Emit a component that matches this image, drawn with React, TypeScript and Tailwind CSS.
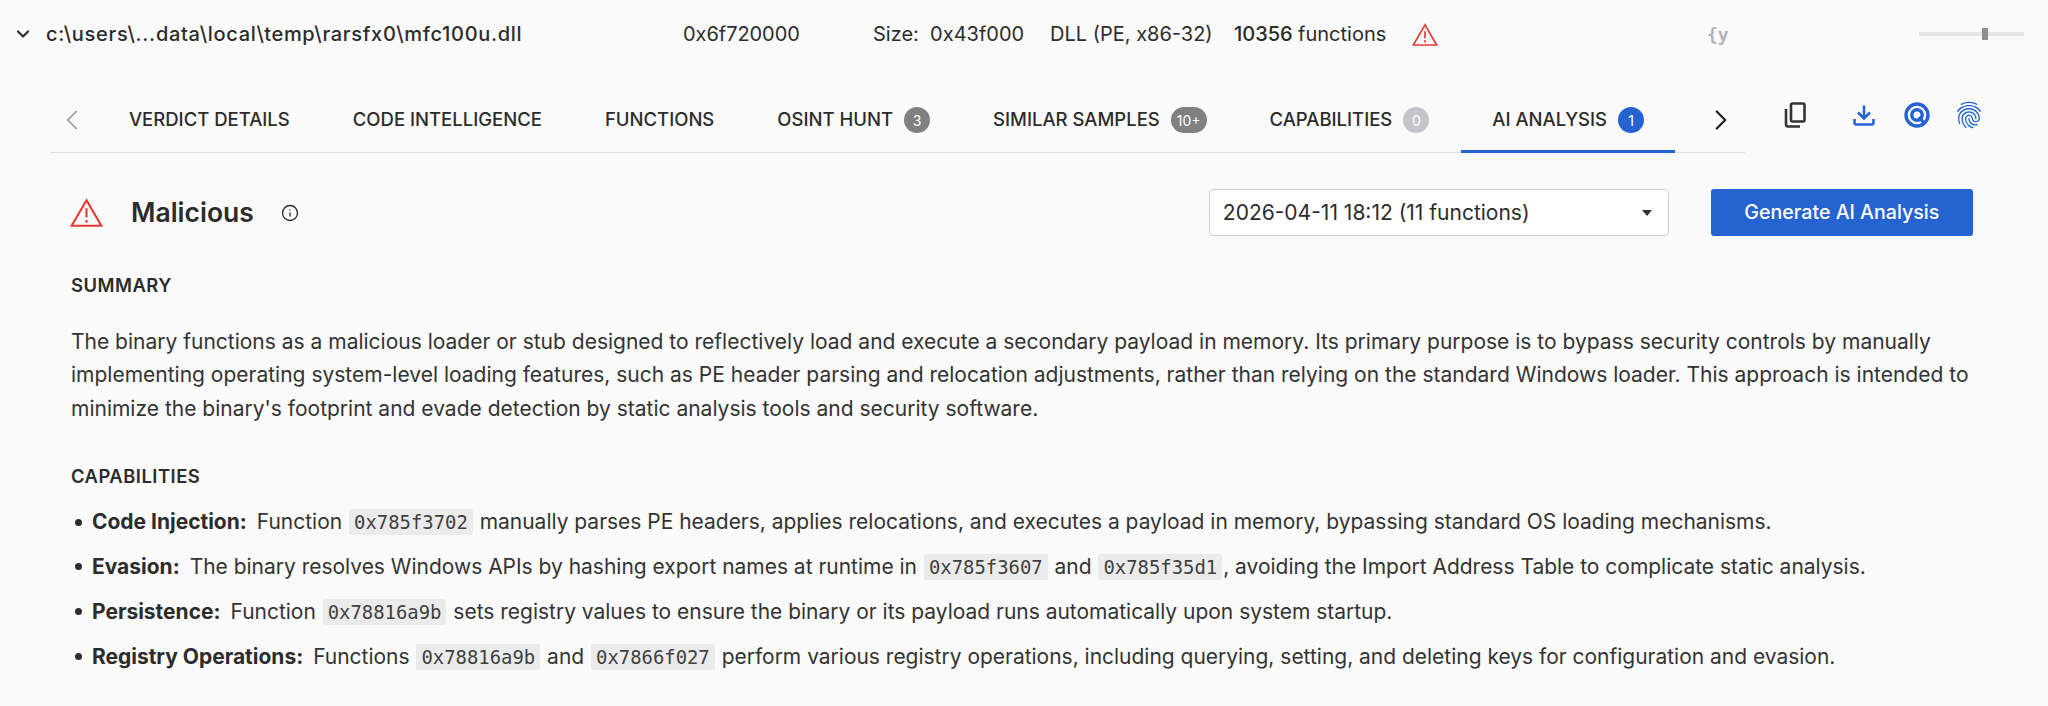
import React from 'react';
import { ChevronDown, ChevronLeft, ChevronRight, Info } from 'lucide-react';
import { MdFingerprint } from 'react-icons/md';

const WarnIcon = ({ className }: { className: string }) => (
  <svg viewBox="0 0 31 27" className={className} fill="none" stroke="#e53935" strokeWidth="2">
    <path d="M15.5 2 L29.5 26 H1.5 Z" strokeLinejoin="miter" />
    <path d="M15.5 9.5 V18" />
    <path d="M15.5 20.5 V23" />
  </svg>
);

const Code = ({ children }: { children: React.ReactNode }) => (
  <code className="bg-[#ebebeb] rounded-[3px] px-[5px] py-[2px] mx-[1px] text-[18.9px] text-[#3f3f3f] font-['DejaVu_Sans_Mono',monospace]">
    {children}
  </code>
);

const Tab = ({ label, badge, color, active }: { label: string; badge?: string; color?: string; active?: boolean }) => (
  <div className="h-full px-[31.5px] pt-[20px] flex items-center gap-[11px] relative">
    <span className="text-[18.5px] font-medium text-[#2c2c2c]">{label}</span>
    {badge && (
      <span className={`${color} min-w-[26px] h-[26px] px-[6px] rounded-full flex items-center justify-center text-white text-[14px]`}>
        {badge}
      </span>
    )}
    {active && <div className="absolute left-0 right-0 bottom-[-1px] h-[3px] bg-[#2563d0]" />}
  </div>
);

const Item = ({ title, children }: { title: string; children: React.ReactNode }) => (
  <li className="h-[44.8px] flex items-center whitespace-nowrap">
    <span className="w-[7px] h-[7px] bg-[#2c2c2c] rounded-full ml-[4px] mr-[10px]" />
    <span>
      <b className="font-bold text-[#2c2c2c]">{title}:</b>
      <span className="ml-[10px]">{children}</span>
    </span>
  </li>
);

export default function App() {
  return (
    <div className="w-[2048px] h-[706px] overflow-hidden bg-[#fafafa] text-[#2c2c2c] font-['Inter',sans-serif]">
      {/* file header */}
      <div className="h-[68px] flex items-center text-[20px] font-medium whitespace-nowrap">
        <ChevronDown className="w-[20px] h-[20px] ml-[13px] mr-[13px]" strokeWidth={2.6} />
        <span className="w-[637px] tracking-[0.7px]">c:\users\...data\local\temp\rarsfx0\mfc100u.dll</span>
        <span className="w-[190px] font-normal tracking-[-0.05px]">0x6f720000</span>
        <span className="w-[177px] font-normal">Size:&nbsp; 0x43f000</span>
        <span className="w-[184px] font-normal">DLL (PE, x86-32)</span>
        <span className="w-[178px]">10356 <span className="font-normal">functions</span></span>
        <WarnIcon className="w-[26px] h-[23px]" />
        <span className="ml-[269px] w-[212px] text-[18px] font-bold text-[#b3b3b3] font-['DejaVu_Sans_Mono',monospace]">{'{y'}</span>
        <div className="w-[105px] h-[4px] bg-[#e6e6e6] relative">
          <div className="absolute left-[63px] top-[-4px] w-[6px] h-[12px] bg-[#8f8f8f]" />
        </div>
      </div>

      {/* tabs */}
      <div className="flex items-start">
        <div className="ml-[50px] w-[1695px] h-[85px] border-b border-[#e0e0e0] flex items-center">
          <div className="h-full pt-[20px] flex items-center w-[47.5px]">
            <ChevronLeft className="w-[34px] h-[34px] ml-[5px] text-[#9a9a9a]" strokeWidth={1.2} />
          </div>
          <Tab label="VERDICT DETAILS" />
          <Tab label="CODE INTELLIGENCE" />
          <Tab label="FUNCTIONS" />
          <Tab label="OSINT HUNT" badge="3" color="bg-[#808080]" />
          <Tab label="SIMILAR SAMPLES" badge="10+" color="bg-[#808080]" />
          <Tab label="CAPABILITIES" badge="0" color="bg-[#c4c5c9]" />
          <Tab label="AI ANALYSIS" badge="1" color="bg-[#2563d0]" active />
          <ChevronRight className="w-[34px] h-[34px] mt-[20px] ml-[29px] text-[#222]" strokeWidth={1.6} />
        </div>
        <div className="flex items-center h-[85px] pt-[9px] text-[#2563d0]">
          <svg viewBox="0 0 22 26" className="w-[22px] h-[26px] ml-[39px] mr-[47px]" fill="none" stroke="#333" strokeWidth="2.6">
            <rect x="7" y="1.5" width="13.5" height="18" rx="1.5" />
            <path d="M2 7 V22.5 A2 2 0 0 0 4 24.5 H16" />
          </svg>
          <svg viewBox="0 0 22 21" className="w-[22px] h-[21px] mr-[29px]" fill="none" stroke="currentColor" strokeWidth="2.6">
            <path d="M11 0.5 V13" />
            <path d="M5 7.5 L11 13.5 L17 7.5" />
            <path d="M1.5 14 V17.5 A2 2 0 0 0 3.5 19.5 H18.5 A2 2 0 0 0 20.5 17.5 V14" />
          </svg>
          <svg viewBox="0 0 26 26" className="w-[26px] h-[26px] mr-[23px]" fill="none" stroke="currentColor" strokeWidth="3.4">
            <circle cx="13" cy="13" r="11" />
            <circle cx="13" cy="13" r="5.2" />
            <path d="M15 15 L21 22" />
          </svg>
          <MdFingerprint className="w-[32px] h-[32px]" />
        </div>
      </div>

      {/* verdict row */}
      <div className="h-[101px] pt-[18px] flex items-center">
        <WarnIcon className="w-[33px] h-[29px] ml-[70px]" />
        <span className="ml-[28px] text-[26.5px] font-semibold">Malicious</span>
        <Info className="w-[18px] h-[18px] ml-[27px]" strokeWidth={1.8} />
        <div className="ml-[910px] w-[460px] h-[47px] bg-white border border-[#cfcfcf] rounded-[4px] flex items-center justify-between pl-[13px] pr-[16px] text-[21px] whitespace-nowrap">
          <span>2026-04-11 18:12 (11 functions)</span>
          <span className="w-0 h-0 border-x-[5.5px] border-x-transparent border-t-[6px] border-t-[#333]" />
        </div>
        <button className="ml-[42px] w-[262px] h-[47px] bg-[#2563d0] rounded-[3px] text-white text-[19.6px] font-medium">
          Generate AI Analysis
        </button>
      </div>

      {/* summary */}
      <div className="pl-[71px] pr-[60px]">
        <h3 className="text-[18.4px] font-semibold tracking-[0.5px] mt-[19px] h-[24px] leading-[24px]">SUMMARY</h3>
        <p className="mt-[28px] text-[21px] leading-[33.4px] text-[#333]">
          The binary functions as a malicious loader or stub designed to reflectively load and execute a secondary payload in memory. Its primary purpose is to bypass security controls by manually implementing operating system-level loading features, such as PE header parsing and relocation adjustments, rather than relying on the standard Windows loader. This approach is intended to minimize the binary's footprint and evade detection by static analysis tools and security software.
        </p>
        <h3 className="text-[18.4px] font-semibold tracking-[0.5px] mt-[39px] h-[24px] leading-[24px]">CAPABILITIES</h3>
        <ul className="mt-[11.5px] text-[20.97px] text-[#333]">
          <Item title="Code Injection">Function <Code>0x785f3702</Code> manually parses PE headers, applies relocations, and executes a payload in memory, bypassing standard OS loading mechanisms.</Item>
          <Item title="Evasion">The binary resolves Windows APIs by hashing export names at runtime in <Code>0x785f3607</Code> and <Code>0x785f35d1</Code>, avoiding the Import Address Table to complicate static analysis.</Item>
          <Item title="Persistence">Function <Code>0x78816a9b</Code> sets registry values to ensure the binary or its payload runs automatically upon system startup.</Item>
          <Item title="Registry Operations">Functions <Code>0x78816a9b</Code> and <Code>0x7866f027</Code> perform various registry operations, including querying, setting, and deleting keys for configuration and evasion.</Item>
        </ul>
      </div>
    </div>
  );
}
